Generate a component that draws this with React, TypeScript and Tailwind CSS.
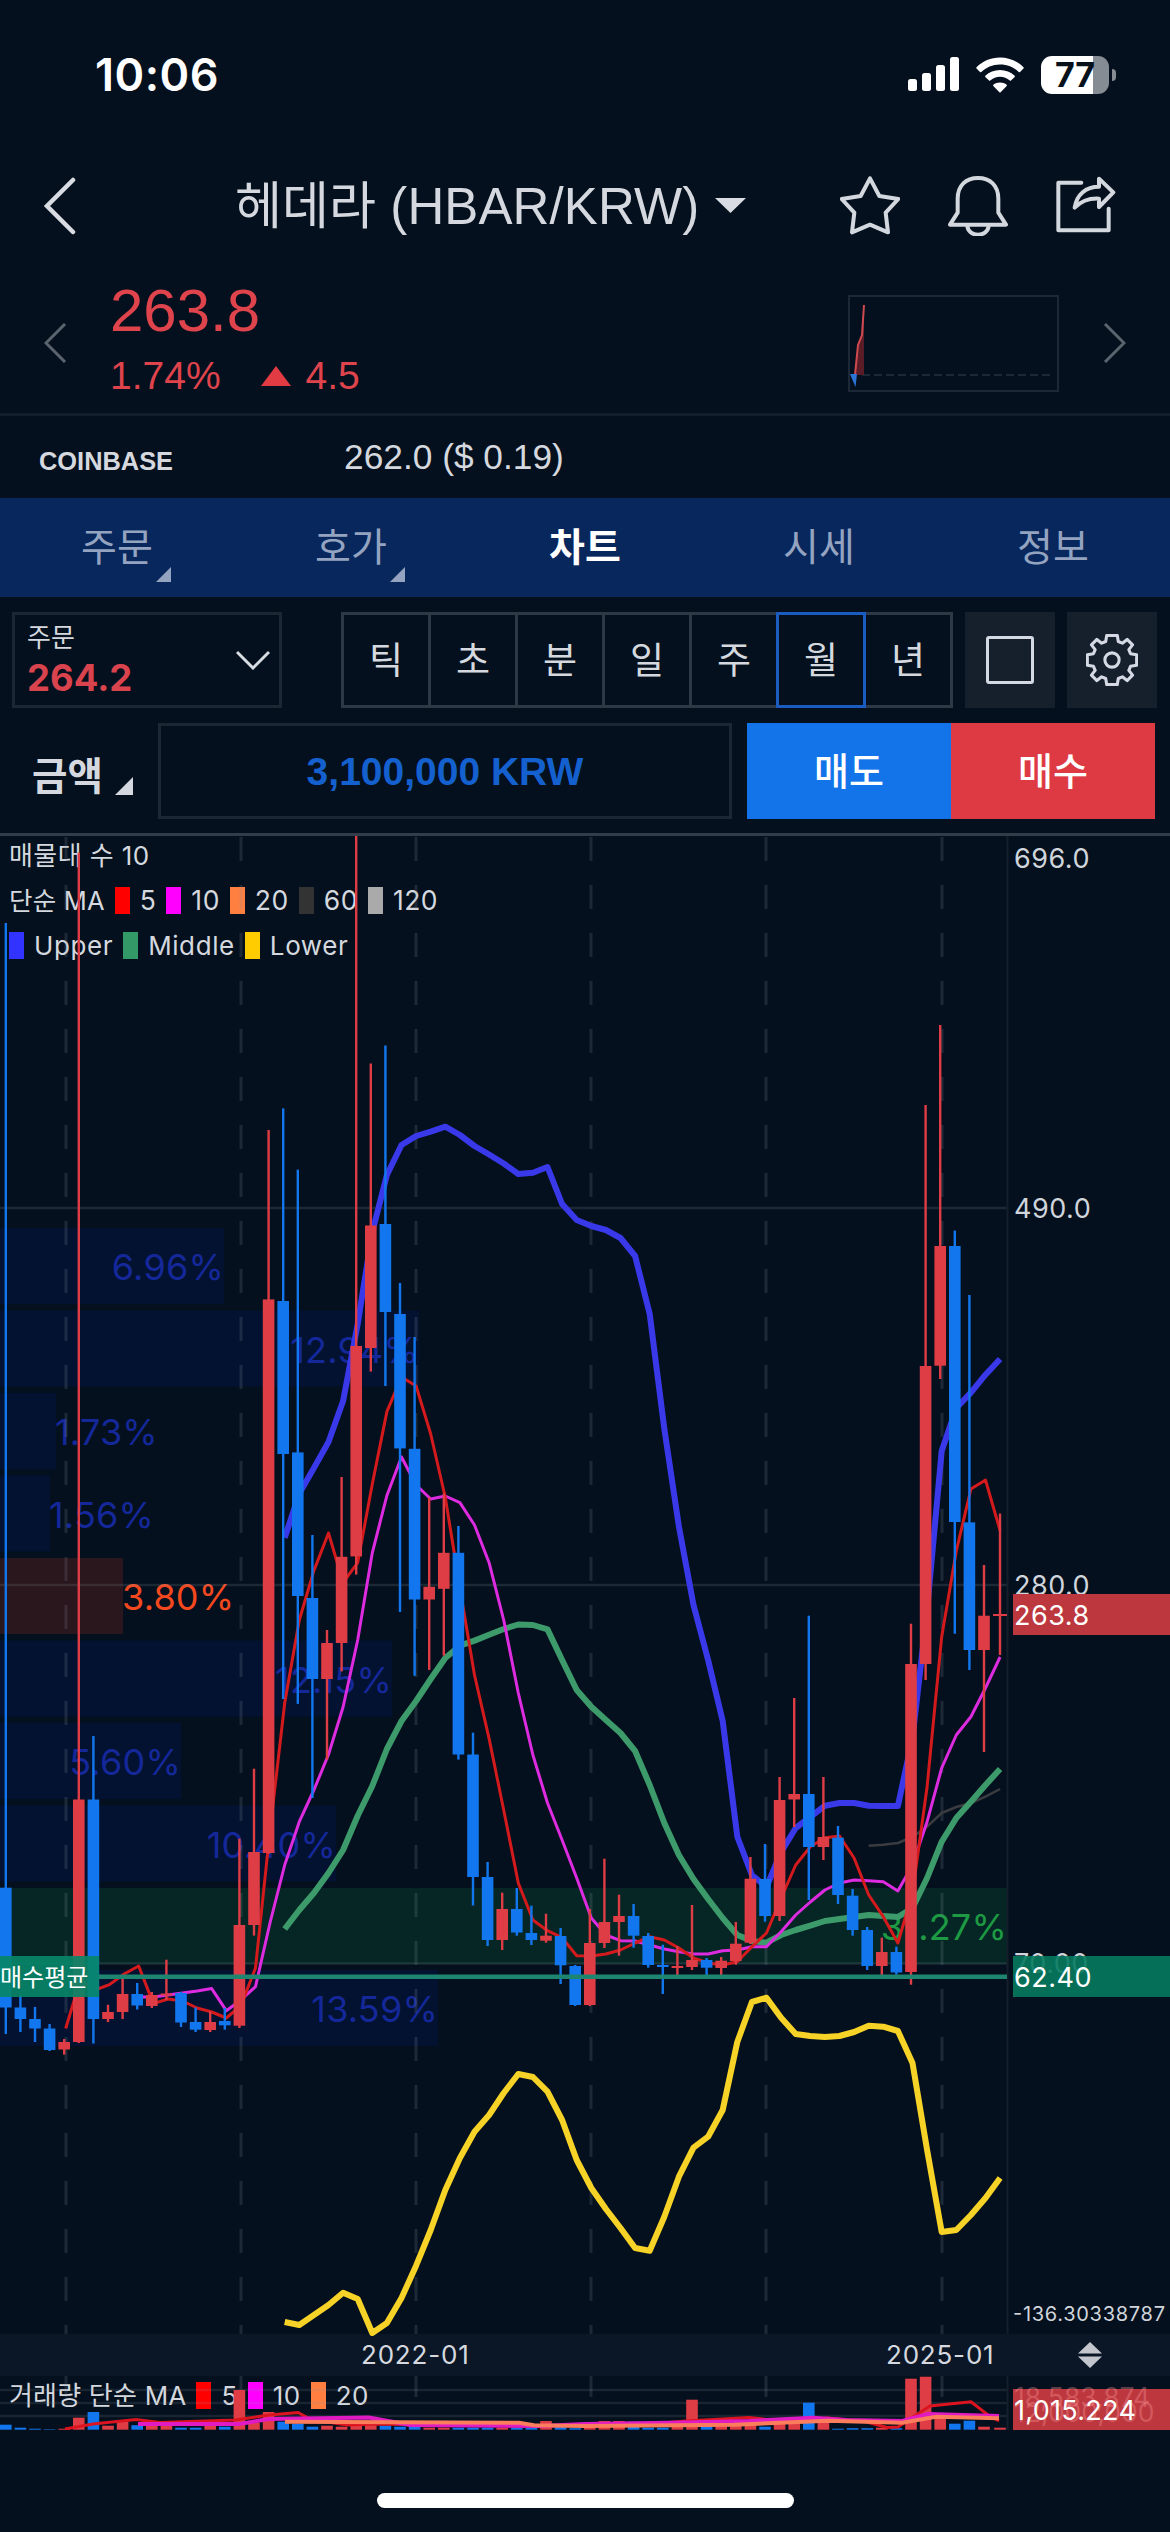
// src/App.tsx
import type { ReactNode } from 'react'

const RED = '#df3d45'
const BLUE = '#1277ee'

type Candle = [high: number, top: number, bottom: number, low: number, dir: 'u' | 'd']
type Point = [x: number, y: number]

const STEP = 14.6
const candleX = (i: number) => (i === 68 ? 1000 : 5.8 + STEP * i)
const lineX = (i: number) => 7.3 + STEP * i

const CANDLES: Candle[] = [
  [923, 1887.7, 2007.5, 2034, 'd'],
  [1995, 2007.5, 2019, 2032, 'd'],
  [2007, 2019, 2028.5, 2042, 'd'],
  [2024, 2028.5, 2050, 2051, 'd'],
  [2039, 2042, 2049.5, 2054.6, 'u'],
  [852.5, 1799.5, 2042, 2043, 'u'],
  [1736, 1799.5, 2019, 2043.5, 'd'],
  [2004.8, 2012, 2019, 2022, 'u'],
  [1978, 1994, 2012, 2019, 'u'],
  [1983, 1994, 2005.5, 2009.5, 'd'],
  [1992, 1995, 2006, 2008, 'u'],
  [1959.7, 1993.5, 1995.5, 2000, 'u'],
  [1992, 1993, 2022.5, 2027, 'd'],
  [2007.5, 2022, 2029.7, 2032, 'd'],
  [2011.5, 2022, 2030, 2032, 'u'],
  [2008, 2021, 2025.3, 2029.7, 'd'],
  [1838.7, 1925, 2025.7, 2028, 'u'],
  [1768.7, 1852, 1925, 1935.6, 'u'],
  [1130, 1299.4, 1853, 1854, 'u'],
  [1108.4, 1301, 1454, 1699, 'd'],
  [1169.6, 1452.4, 1596, 1703.9, 'd'],
  [1535, 1598, 1679, 1798, 'd'],
  [1630, 1643, 1679, 1759.6, 'u'],
  [1477, 1556.8, 1643, 1671.4, 'u'],
  [836, 1346, 1556.4, 1574.6, 'u'],
  [1063.5, 1225.5, 1348, 1371.6, 'u'],
  [1045.5, 1224, 1312, 1386, 'd'],
  [1283, 1314, 1448.4, 1612, 'd'],
  [1337, 1448.8, 1599.5, 1675.8, 'd'],
  [1497.5, 1586.8, 1599.5, 1669.9, 'u'],
  [1493.5, 1552.8, 1588.8, 1655.6, 'u'],
  [1526, 1552.8, 1754.5, 1759.6, 'd'],
  [1732.7, 1754.5, 1877, 1905.5, 'd'],
  [1862, 1877, 1940, 1946, 'd'],
  [1892.7, 1909, 1940, 1950, 'u'],
  [1888, 1909, 1932.5, 1935.7, 'd'],
  [1905.7, 1933, 1940, 1945, 'd'],
  [1913.7, 1935.7, 1940.7, 1942.7, 'u'],
  [1928, 1936, 1965.3, 1984, 'd'],
  [1965, 1966, 2005, 2006, 'd'],
  [1909, 1943, 2005, 2006, 'u'],
  [1858.7, 1922, 1943, 1948, 'u'],
  [1894.7, 1916, 1922, 1955.7, 'u'],
  [1904, 1916, 1935.7, 1947.7, 'd'],
  [1933, 1936, 1965, 1967.7, 'd'],
  [1944.7, 1965, 1967, 1994, 'd'],
  [1946, 1966, 1968, 1975, 'u'],
  [1905, 1960, 1967, 1970, 'u'],
  [1958, 1960, 1967.7, 1975, 'd'],
  [1957, 1960.7, 1968, 1975, 'u'],
  [1922, 1943.7, 1961, 1964.7, 'u'],
  [1857, 1878.7, 1942.7, 1944, 'u'],
  [1844, 1879, 1916, 1921.7, 'd'],
  [1777, 1800, 1916, 1921, 'u'],
  [1698, 1794, 1799.5, 1827, 'u'],
  [1615.7, 1794, 1847, 1900, 'd'],
  [1777, 1837, 1847, 1860, 'u'],
  [1826, 1837.7, 1895, 1904, 'd'],
  [1889, 1895.7, 1930, 1935.7, 'd'],
  [1927, 1930, 1966, 1970, 'd'],
  [1937.7, 1952, 1966, 1975, 'u'],
  [1946.7, 1952, 1972.5, 1974.7, 'd'],
  [1623.7, 1664, 1972, 1984.7, 'u'],
  [1105, 1366, 1664, 1680, 'u'],
  [1025, 1246, 1365.7, 1379, 'u'],
  [1230.6, 1246, 1522, 1633.7, 'd'],
  [1295, 1522.4, 1650, 1670, 'd'],
  [1565, 1615.7, 1650, 1752, 'u'],
  [1513.5, 1614, 1616, 1655, 'u'],
]

const UPPER = [
  1537.8, 1493.5, 1468, 1442, 1401, 1324, 1232, 1175, 1145, 1136, 1131.6, 1126.7, 1135, 1146, 1154.5, 1163.5, 1174,
  1172.7, 1167, 1204, 1220, 1226, 1230, 1238, 1256, 1314, 1428.6, 1526.5, 1605, 1660, 1721, 1836.7, 1875, 1887, 1852,
  1828, 1817, 1805.7, 1803, 1803, 1805.7, 1806, 1806, 1738, 1610, 1451, 1408, 1392.6, 1374.7, 1359,
]
const MIDDLE = [
  1929, 1910, 1893, 1873, 1850, 1815.8, 1786, 1749, 1721, 1701, 1679, 1658, 1645.7, 1640.6, 1634.7, 1629, 1624.5, 1625,
  1629.4, 1660, 1690, 1706.7, 1720, 1733, 1751, 1785, 1823, 1855, 1879, 1899, 1918, 1935, 1941, 1942.7, 1935, 1930,
  1925.7, 1921, 1919, 1917, 1915, 1916, 1917, 1908, 1878, 1841.7, 1818, 1801.7, 1785, 1769,
]
const LOWER = [
  2322, 2325, 2315, 2305, 2292.7, 2299, 2333, 2323, 2298, 2265.7, 2230, 2190, 2158, 2131.7, 2115, 2093, 2074, 2077,
  2091.7, 2120, 2160, 2188, 2209, 2228, 2248, 2250.7, 2216.7, 2176.7, 2147.7, 2136.7, 2110, 2042, 2002, 1997.7, 2017.7,
  2034, 2036, 2037, 2036, 2032, 2025.7, 2026.7, 2031, 2063, 2150, 2232, 2230, 2215, 2198, 2178,
]
const MA5 = [
  2028.5, 1980, 1990, 1984.6, 1974, 1966, 2003.6, 1999, 2001, 2008, 2012, 2018, 2005.6, 1968, 1829.6, 1703, 1620, 1570.6,
  1533, 1582.5, 1562.7, 1484, 1411.6, 1377, 1386, 1434, 1497.5, 1588, 1675, 1738.6, 1810, 1883, 1920, 1930.7, 1937.7,
  1955.7, 1956, 1954, 1950, 1943, 1936.7, 1940, 1948, 1958, 1963, 1965, 1961.7, 1946.7, 1933, 1898, 1865, 1846.7, 1837.7,
  1836, 1858, 1895, 1916.7, 1943, 1893, 1786.7, 1636.7, 1551, 1489, 1480, 1530.6,
]
const MA10 = [
  1997, 1997, 1995, 1993, 1991, 1988.6, 2010.7, 2000, 1986.6, 1922.5, 1865, 1821.7, 1790, 1754.5, 1707, 1640, 1552.8,
  1495.5, 1457, 1485, 1499, 1496, 1502.6, 1525, 1562.7, 1620, 1693, 1755, 1803, 1840, 1878, 1918, 1935, 1940.7, 1941, 1945,
  1949, 1951.7, 1954, 1954, 1950.7, 1950, 1946.7, 1946.7, 1931.7, 1915, 1902, 1890, 1883, 1880, 1880.7, 1881.7, 1891, 1865,
  1821.7, 1768, 1735, 1716.7, 1688, 1657,
]
const MA60 = [1845.7, 1844.7, 1843, 1837, 1826.7, 1813, 1807, 1803, 1796.7, 1789]

const PROFILE = [
  { y: 1228, w: 224, label: '6.96%' },
  { y: 1310.5, w: 419, label: '12.94%' },
  { y: 1393, w: 56, label: '1.73%' },
  { y: 1475.5, w: 50, label: '1.56%' },
  { y: 1558, w: 123, label: '3.80%' },
  { y: 1640.5, w: 392, label: '12.15%' },
  { y: 1723, w: 181, label: '5.60%' },
  { y: 1805.5, w: 336, label: '10.40%' },
  { y: 1888, w: 1007, label: '31.27%' },
  { y: 1970, w: 438, label: '13.59%' },
]

const GRID_X = [66, 241, 416, 591, 766, 942]

const VOLUMES = [
  5, 2, 1, 0.5, 1, 12, 17.7, 4, 8, 4.5, 5, 6, 2, 2, 4, 3, 39.7, 7, 17.7, 8, 6, 3, 4, 3, 4.5, 5, 4, 3, 3, 2, 2, 2, 2, 2, 2,
  2, 3, 8.7, 3, 1.5, 7, 8.7, 8.7, 8, 2, 2, 4.5, 30, 4.5, 5, 5, 6, 3, 11, 8, 27, 8, 1, 1.5, 1.5, 2, 1.5, 51, 53, 13, 6, 9,
  3, 2,
]
const VOL_MA5: Point[] = [
  [65, 2429], [93, 2424], [136, 2419.5], [160, 2422.5], [235, 2420], [269, 2415], [298, 2412.5], [311, 2419.5], [347, 2425],
  [377, 2424], [430, 2425], [530, 2426], [640, 2425], [686, 2421], [749, 2417.5], [772, 2420], [805, 2420], [828, 2418],
  [865, 2421.5], [887, 2427.5], [898, 2427], [913, 2417], [930, 2406], [971, 2401.7], [988, 2415], [999, 2421],
]
const VOL_MA10: Point[] = [
  [138, 2424], [239, 2424], [269, 2419], [369, 2417.5], [388, 2421], [410, 2425], [541, 2426], [585, 2424], [686, 2422.5],
  [749, 2421], [813, 2417.7], [846, 2420], [902, 2421], [928, 2414], [999, 2416],
]
const VOL_MA20: Point[] = [
  [285, 2421.7], [519, 2422.7], [534, 2425.3], [585, 2426], [734, 2424.7], [828, 2420.7], [902, 2422.7], [936, 2416.7],
  [999, 2418.3],
]

const series = (values: number[], start: number) => values.map((y, i) => `${lineX(start + i)},${y}`).join(' ')
const pts = (points: Point[]) => points.map(p => p.join(',')).join(' ')

function Swatch({ className }: { className: string }) {
  return <span className={`h-[27px] w-[15px] ${className}`} />
}

function StatusBar() {
  return (
    <div className="flex h-[150px] items-center justify-between pr-[54px] pl-[95px] text-white">
      <span className="font-[Inter] text-[45px] font-semibold tracking-[0.5px]">10:06</span>
      <div className="flex items-center gap-[17px]">
        <svg width="51" height="36" viewBox="0 0 51 36" fill="white">
          <rect x="0" y="22" width="9" height="12" rx="2.5" />
          <rect x="14" y="16" width="9" height="18" rx="2.5" />
          <rect x="28" y="8" width="9" height="26" rx="2.5" />
          <rect x="42" y="0" width="9" height="34" rx="2.5" />
        </svg>
        <svg width="48" height="37" viewBox="0 0 48 37" fill="white">
          <path d="M24 0.5C14.800 0.500 6.500 4.200 0.500 10.200Q0 10.800 0.500 11.400L4 15Q4.700 15.500 5.300 15C10 10.500 16.500 7.500 24 7.500S38 10.500 42.700 15Q43.300 15.500 44 15L47.500 11.400Q48 10.800 47.500 10.200C41.500 4.200 33.200 0.500 24 0.500Z" />
          <path d="M24 13C18.300 13 13.200 15.200 9.300 18.800Q8.800 19.400 9.300 20L13 23.600Q13.600 24 14.200 23.600A14.500 14.500 0 0 1 33.800 23.600Q34.400 24 35 23.600L38.700 20Q39.200 19.400 38.700 18.800C34.800 15.200 29.700 13 24 13Z" />
          <path d="M24 25.500C21.300 25.500 19.200 26.300 17.300 27.700Q16.800 28.300 17.300 28.900L23.400 35.200Q24 35.700 24.600 35.200L30.700 28.900Q31.200 28.300 30.700 27.700C28.800 26.300 26.700 25.500 24 25.500Z" />
        </svg>
        <div className="flex items-center gap-[3px]">
          <div className="flex h-[38px] w-[68px] items-center justify-center rounded-[11px] bg-linear-to-r from-white from-77% to-[#868c94] to-77%">
            <span className="font-[Inter] text-[34px] leading-none font-bold text-[#06111c]">77</span>
          </div>
          <div className="h-[12px] w-[4px] rounded-r-full bg-[#868c94]" />
        </div>
      </div>
    </div>
  )
}

function Header() {
  return (
    <div className="flex h-[115px] items-center pr-[54px] pb-[4px] pl-[43px]">
      <svg width="34" height="58" viewBox="0 0 34 58" fill="none" stroke="#d9dde3" strokeWidth="4.500" strokeLinecap="round">
        <path d="M30 3L4 29L30 55" />
      </svg>
      <h1 className="ml-[158px] pt-[2px] text-[51px] leading-none tracking-[0.1px] whitespace-nowrap">헤데라 (HBAR/KRW)</h1>
      <svg className="ml-[16px]" width="31" height="15" viewBox="0 0 31 15" fill="#d9dde3">
        <path d="M0 0H31L15.500 15Z" />
      </svg>
      <div className="ml-auto flex gap-[48px]">
        <svg width="60" height="60" viewBox="0 0 180 180" fill="none" stroke="#d3d7de" strokeWidth="12" strokeLinejoin="round">
          <path d="M90 7L118 60L175 69L137 110L144 169L90 146L36 169L43 110L5 69L62 60Z" />
        </svg>
        <svg width="60" height="60" viewBox="0 0 180 180" fill="none" stroke="#d3d7de" strokeWidth="12" strokeLinejoin="round">
          <path d="M6 146L29 110V68C29 28 54 6 90 6S151 28 151 68V110L174 146Z" />
          <path d="M58 150C62 185 118 185 122 150" />
        </svg>
        <svg width="60" height="60" viewBox="0 0 180 180" fill="none" stroke="#d3d7de" strokeWidth="12" strokeLinejoin="round" strokeLinecap="round">
          <path d="M76 20H7V163H158V98" />
          <path d="M56 95C62 55 90 32 129 32V8L172 49L129 93V68C95 66 75 76 56 95Z" />
        </svg>
      </div>
    </div>
  )
}

function PriceRow() {
  return (
    <div className="flex h-[151px] items-start border-b-3 border-[#131e2b] px-[44px] pt-[14px]">
      <svg className="mt-[44px]" width="23" height="40" viewBox="0 0 23 40" fill="none" stroke="#5b646e" strokeWidth="3">
        <path d="M21 1L2 20L21 39" />
      </svg>
      <div className="ml-[43px] text-[#df434c]">
        <div className="text-[60px] leading-[64px]">263.8</div>
        <div className="mt-[11px] flex items-center text-[39px] leading-[44px]">
          1.74%
          <svg className="mr-[15px] ml-[40px]" width="30" height="20" viewBox="0 0 30 20" fill="#e23b43">
            <path d="M15 0L30 20H0Z" />
          </svg>
          4.5
        </div>
      </div>
      <svg className="mt-[16px] ml-auto" width="212" height="97" viewBox="0 0 212 97" fill="none">
        <rect x="1" y="1" width="209" height="95" stroke="#1c2836" strokeWidth="2" />
        <path d="M14 80H206" stroke="#1c2836" strokeWidth="2" strokeDasharray="8 4" />
        <path d="M7 80L10 50L14 40L16 10V80Z" fill="#5a1c26" />
        <path d="M7 80L10 50L14 40L16 10" stroke="#cf4a50" strokeWidth="2" />
        <path d="M2 79H9L7.500 92Z" fill="#2a74d8" />
      </svg>
      <svg className="mt-[44px] ml-[43px]" width="23" height="40" viewBox="0 0 23 40" fill="none" stroke="#5b646e" strokeWidth="3">
        <path d="M2 1L21 20L2 39" />
      </svg>
    </div>
  )
}

function CornerMark({ className }: { className: string }) {
  return (
    <svg className={className} viewBox="0 0 16 16" fill="currentColor">
      <path d="M16 0V16H0Z" />
    </svg>
  )
}

function Tabs() {
  const tabs = [
    { label: '주문', menu: true },
    { label: '호가', menu: true },
    { label: '차트', active: true },
    { label: '시세' },
    { label: '정보' },
  ]
  return (
    <nav className="grid h-[99px] grid-cols-5 bg-[#08275d]">
      {tabs.map(tab => (
        <div
          key={tab.label}
          className={`relative flex items-center justify-center pt-[2px] text-[39px] ${tab.active ? 'font-bold text-white' : 'text-[#94a4c0]'}`}
        >
          {tab.label}
          {tab.menu && <CornerMark className="absolute right-[63px] bottom-[15px] h-[15px] w-[15px]" />}
        </div>
      ))}
    </nav>
  )
}

function Toolbar() {
  return (
    <div className="flex h-[111px] pt-[15px] pl-[12px]">
      <div className="flex h-[96px] w-[270px] items-center justify-between border-3 border-[#1c2733] pr-[9px] pl-[12px]">
        <div>
          <div className="text-[26px] leading-[30px]">주문</div>
          <div className="mt-[6px] font-[Inter] text-[36.5px] leading-[38px] font-bold text-[#d9434d]">264.2</div>
        </div>
        <svg width="34" height="20" viewBox="0 0 34 20" fill="none" stroke="#d9dde3" strokeWidth="3">
          <path d="M1 2L17 18L33 2" />
        </svg>
      </div>
      <div className="ml-[59px] flex h-[96px] w-[612px] border-3 border-[#2f3946]">
        {['틱', '초', '분', '일', '주', '월', '년'].map(unit => (
          <div
            key={unit}
            className={
              unit === '월'
                ? 'relative z-10 -my-[3px] -ml-[3px] flex flex-1 items-center justify-center border-3 border-[#1a5cc0] pt-[3px] text-[37px]'
                : 'flex flex-1 items-center justify-center border-r-3 border-[#2f3946] pt-[3px] text-[37px] last:border-r-0'
            }
          >
            {unit}
          </div>
        ))}
      </div>
      <div className="ml-[12px] flex h-[96px] w-[90px] items-center justify-center bg-[#16202d]">
        <div className="h-[48px] w-[48px] rounded-[3px] border-3 border-[#d5d9e4]" />
      </div>
      <div className="ml-[12px] flex h-[96px] w-[90px] items-center justify-center bg-[#16202d]">
        <svg width="52" height="52" viewBox="0 0 153 153" fill="none" stroke="#d5d9e4" strokeWidth="9" strokeLinejoin="round">
          <path d="M61 4H92L95 22L107 27L121 16L137 32L126 46L131 58L149 61V92L131 95L126 107L137 121L121 137L107 126L95 131L92 149H61L58 131L46 126L32 137L16 121L27 107L22 95L4 92V61L22 58L27 46L16 32L32 16L46 27L58 22Z" />
          <circle cx="76.500" cy="76.500" r="21" />
        </svg>
      </div>
    </div>
  )
}

function OrderRow() {
  return (
    <div className="flex h-[128px] items-start border-b-3 border-[#333d49] pt-[15px]">
      <div className="flex h-[96px] w-[158px] items-center pt-[12px] pl-[32px] text-[38.5px] font-bold">
        금액
        <CornerMark className="mt-[17px] ml-[12px] h-[18px] w-[18px]" />
      </div>
      <div className="flex h-[96px] w-[574px] items-center justify-center border-3 border-[#1c2733] pt-[2px] text-[39px] font-bold text-[#1560cf]">
        3,100,000 KRW
      </div>
      <button className="ml-[15px] h-[96px] w-[204px] bg-[#1374ea] pt-[2px] text-[38px] font-medium text-white">매도</button>
      <button className="h-[96px] w-[204px] bg-[#de3a44] pt-[2px] text-[38px] font-medium text-white">매수</button>
    </div>
  )
}

function Legend({ children, className }: { children: ReactNode; className: string }) {
  return (
    <div className={`flex h-[27px] items-center font-[Inter,'Noto_Sans_CJK_KR',sans-serif] leading-none whitespace-nowrap ${className}`}>
      {children}
    </div>
  )
}

function PriceChart() {
  return (
    <div className="relative z-10 h-[1498px]">
      <div className="absolute top-[6px] left-[9px] flex flex-col gap-[18px]">
        <Legend className="text-[26px] tracking-[0.4px]">매물대 수 10</Legend>
        <Legend className="gap-[10px] text-[26.5px] tracking-[0.5px]">
          <span className="text-[25.5px] tracking-[0.2px]">단순 MA</span>
          <Swatch className="bg-[#ff0000]" /> 5 <Swatch className="bg-[#ff00ff]" /> 10
          <Swatch className="bg-[#ff7f40]" /> 20 <Swatch className="bg-[#333333]" /> 60
          <Swatch className="bg-[#aaaaaa]" /> 120
        </Legend>
        <Legend className="gap-[10px] text-[26px] tracking-[0.6px]">
          <Swatch className="bg-[#3333ff]" /> Upper <Swatch className="bg-[#339966]" /> Middle
          <Swatch className="bg-[#ffcc00]" /> Lower
        </Legend>
      </div>

      <svg className="relative block overflow-visible font-[Inter,'Noto_Sans_CJK_KR',sans-serif]" width="1170" height="1498" viewBox="0 836 1170 1498">
        {/* Volume profile */}
        {PROFILE.map(row => {
          const tone = row.label === '3.80%' ? 'current' : row.w > 1000 ? 'max' : 'base'
          const outside = row.w < 130
          return (
            <g key={row.label}>
              <rect
                x="0"
                y={row.y}
                width={row.w}
                height="76"
                fill={tone === 'current' ? '#2a161d' : tone === 'max' ? '#052624' : '#031230'}
              />
              <text
                x={outside ? row.w - 1 : row.w}
                y={row.y + 52}
                fontSize="36"
                letterSpacing="0.2"
                textAnchor={outside ? 'start' : 'end'}
                fill={tone === 'current' ? '#f4481f' : tone === 'max' ? '#1d9a43' : '#15289a'}
              >
                {row.label}
              </text>
            </g>
          )
        })}

        {/* Grid */}
        {[1208, 1585, 1963.5].map(y => (
          <path key={y} d={`M0 ${y}H1007`} stroke="#8893a0" strokeOpacity="0.18" strokeWidth="2.500" />
        ))}
        {GRID_X.map(x => (
          <path key={x} d={`M${x} 837V2334`} stroke="#8893a0" strokeOpacity="0.2" strokeWidth="3" strokeDasharray="24 24" />
        ))}
        <path d="M1007.500 836V2334" stroke="#141f2b" strokeWidth="2" />

        {/* Bands and moving averages */}
        <g fill="none" strokeLinejoin="round">
          <polyline points={series(MA60, 59)} stroke="#3a3c40" strokeWidth="2.500" />
          <polyline points={series(LOWER, 19)} stroke="#f8d327" strokeWidth="6" />
          <polyline points={series(UPPER, 19)} stroke="#3a39ea" strokeWidth="6" />
          <polyline points={series(MIDDLE, 19)} stroke="#3d9a6b" strokeWidth="6" />
          <polyline points={series(MA10, 9)} stroke="#dd2be0" strokeWidth="3" />
          <polyline points={series(MA5, 4)} stroke="#d41a1c" strokeWidth="3" />
        </g>

        {/* Candles */}
        {CANDLES.map(([high, top, bottom, low, dir], i) => {
          const x = candleX(i)
          const color = dir === 'u' ? RED : BLUE
          const half = i === 68 ? 7 : 5.8
          return (
            <g key={i} fill={color}>
              <rect x={x - 1.2} y={high} width="2.400" height={low - high} />
              <rect x={x - half} y={top} width={half * 2} height={bottom - top} />
            </g>
          )
        })}

        {/* Average buy price */}
        <rect x="99" y="1974.500" width="908" height="4.500" fill="#1d8570" />
        <rect x="0" y="1956" width="99" height="41" fill="#088668" fillOpacity="0.92" />
        <text x="0" y="1986" fontSize="24" fill="white">매수평균</text>

        {/* Price axis */}
        <g fontSize="27" fill="#d0d5dc" letterSpacing="0.5">
          <text x="1014" y="868">696.0</text>
          <text x="1014" y="1218">490.0</text>
          <text x="1014" y="1595">280.0</text>
          <text x="1014" y="1973">70.00</text>
        </g>
        <rect x="1013" y="1594" width="157" height="41" fill="#bc373e" />
        <rect x="1013" y="1956" width="157" height="41" fill="#057a5f" fillOpacity="0.9" />
        <g fontSize="27" fill="white" letterSpacing="0.5">
          <text x="1014" y="1625">263.8</text>
          <text x="1014" y="1987">62.40</text>
        </g>
        <text x="1013" y="2321" fontSize="20" fill="#d0d5dc" textLength="152">-136.30338787</text>
      </svg>
    </div>
  )
}

function DateAxis() {
  return (
    <div className="flex h-[42px] items-center bg-[#0b1727] pl-[361px] font-[Inter] text-[26px] leading-none tracking-[0.8px]">
      <span className="w-[525px]">2022-01</span>
      <span className="w-[192px]">2025-01</span>
      <svg width="24" height="26" viewBox="0 0 24 26" fill="#c3c7cd">
        <path d="M12 0L24 11.500H0ZM0 14.500H24L12 26Z" />
      </svg>
    </div>
  )
}

function VolumeChart() {
  return (
    <div className="relative h-[54px]">
      <Legend className="absolute top-[6px] left-[9px] gap-[10px] text-[26px] tracking-[0.5px]">
        <span className="text-[26px] tracking-[0.2px]">거래량 단순 MA</span>
        <Swatch className="bg-[#ff0000]" /> 5 <Swatch className="bg-[#ff00ff]" /> 10
        <Swatch className="bg-[#ff7f40]" /> 20
      </Legend>
      <svg className="relative block font-[Inter]" width="1170" height="54" viewBox="0 2376 1170 54">
        {[2390, 2403, 2416].map(y => (
          <path key={y} d={`M0 ${y}H1007`} stroke="#8893a0" strokeOpacity="0.16" strokeWidth="2.500" />
        ))}
        {GRID_X.map(x => (
          <path key={x} d={`M${x} 2376V2397`} stroke="#8893a0" strokeOpacity="0.2" strokeWidth="3" />
        ))}
        <path d="M1007.500 2376V2430" stroke="#141f2b" strokeWidth="2" />
        {VOLUMES.map((h, i) => (
          <rect key={i} x={candleX(i) - 5.8} y={2429.7 - h} width="11.600" height={h} fill={CANDLES[i][4] === 'u' ? RED : BLUE} />
        ))}
        <g fill="none" strokeWidth="3">
          <polyline points={pts(VOL_MA5)} stroke="#dc1420" />
          <polyline points={pts(VOL_MA10)} stroke="#e01bc4" strokeWidth="4" />
          <polyline points={pts(VOL_MA20)} stroke="#fb7d5c" strokeWidth="4" />
        </g>
        <rect x="1013" y="2389" width="157" height="41" fill="#bc373e" />
        <g fontSize="26.500" fill="#ff9a9c" fillOpacity="0.35">
          <text x="1014" y="2407">18,583,874</text>
          <text x="1014" y="2422">12,000,000</text>
        </g>
        <text x="1014" y="2420" fontSize="27" letterSpacing="0.3" fill="white">1,015.224</text>
      </svg>
    </div>
  )
}

export default function App() {
  return (
    <main className="flex h-[2532px] w-[1170px] flex-col overflow-hidden bg-[#04101d] font-['Liberation_Sans','Noto_Sans_CJK_KR',sans-serif] text-[#d5d9df]">
      <StatusBar />
      <Header />
      <PriceRow />
      <div className="flex h-[82px] items-center pl-[39px]">
        <span className="w-[305px] pt-[8px] text-[25.4px] font-bold">COINBASE</span>
        <span className="text-[35.3px]">262.0 ($ 0.19)</span>
      </div>
      <Tabs />
      <Toolbar />
      <OrderRow />
      <PriceChart />
      <DateAxis />
      <VolumeChart />
      <div className="mt-[63px] h-[15px] w-[417px] self-center rounded-full bg-white" />
    </main>
  )
}
